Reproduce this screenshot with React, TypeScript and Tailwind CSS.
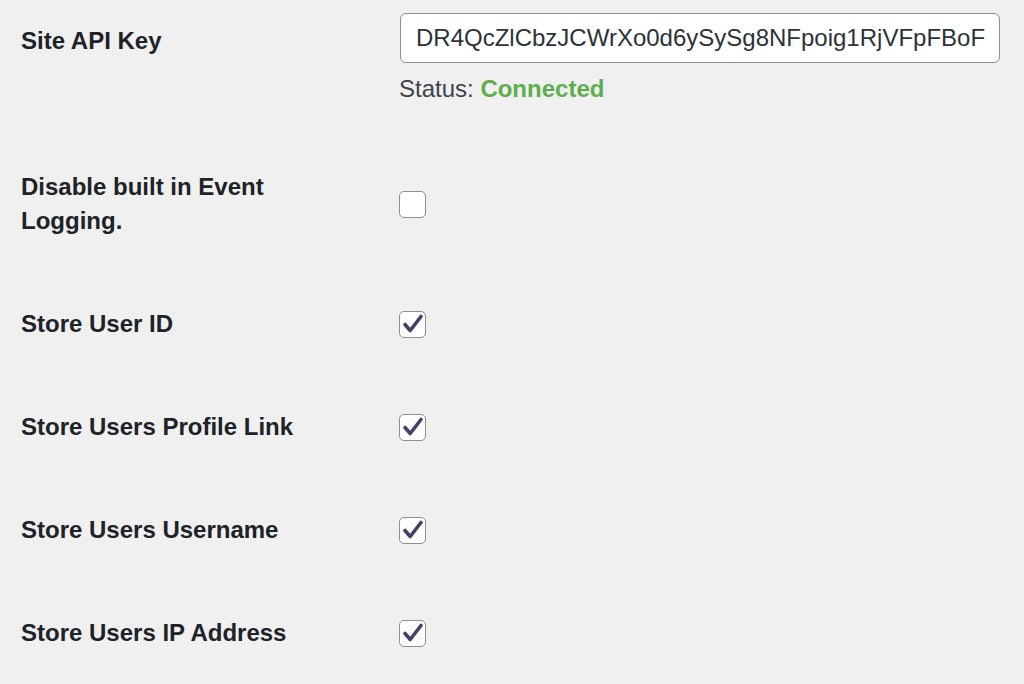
import React from "react";

const Check = ({ checked }: { checked: boolean }) => (
  <div className="relative w-[27px] h-[27px] rounded-[5px] border-[1.5px] border-[#8c8f94] bg-white shrink-0">
    {checked && (
      <svg viewBox="0 0 27 27" className="absolute left-[-1.5px] top-[-1.5px] w-[27px] h-[27px]">
        <path
          d="M6 14.5 L11.2 20.5 L22 6.5"
          fill="none"
          stroke="#4a3d6b"
          strokeWidth="3.6"
          strokeLinecap="round"
          strokeLinejoin="round"
        />
      </svg>
    )}
  </div>
);

const Row = ({ label, checked }: { label: React.ReactNode; checked: boolean }) => (
  <div className="flex items-center">
    <div className="w-[378px] font-bold text-[24px] leading-[34px] text-[#1d2327]">{label}</div>
    <Check checked={checked} />
  </div>
);

export default function App() {
  return (
    <div
      className="w-[1024px] h-[684px] overflow-hidden bg-[#f0f0f1] pl-[21px] pt-[13px]"
      style={{ fontFamily: '"Liberation Sans", Arial, sans-serif' }}
    >
      <div className="flex items-start">
        <div className="w-[379px] mt-[11px] font-bold text-[24px] leading-[34px] text-[#1d2327]">Site API Key</div>
        <div className="flex flex-col">
          <div className="w-[600px] h-[50px] rounded-[6px] border-[1.5px] border-[#8c8f94] bg-white pl-[15px] pr-[14px] flex items-center">
            <div className="w-full overflow-hidden whitespace-nowrap text-[24px] text-[#2c3338]">
              DR4QcZlCbzJCWrXo0d6ySySg8NFpoig1RjVFpFBoFk7x
            </div>
          </div>
          <div className="mt-[9px] -ml-[1px] text-[24px] leading-[34px] text-[#3c434a]">
            Status: <span className="font-bold text-[#5fae4d]">Connected</span>
          </div>
        </div>
      </div>
      <div className="mt-[64px] flex flex-col gap-[69px]">
        <Row
          label={
            <>
              Disable built in Event
              <br />
              Logging.
            </>
          }
          checked={false}
        />
        <Row label="Store User ID" checked={true} />
        <Row label="Store Users Profile Link" checked={true} />
        <Row label="Store Users Username" checked={true} />
        <Row label="Store Users IP Address" checked={true} />
      </div>
    </div>
  );
}
